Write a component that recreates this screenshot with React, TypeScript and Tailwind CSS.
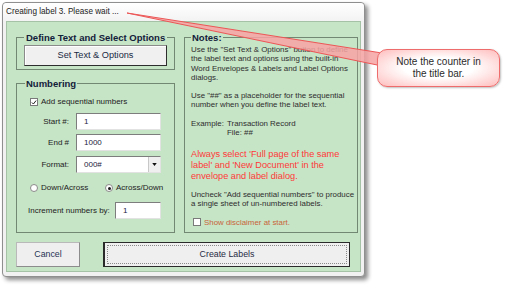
import React from "react";

const Check = ({ checked }: { checked?: boolean }) => (
  <span className="w-[8px] h-[8px] shrink-0 bg-white border border-[#7a7a7a] flex items-center justify-center">
    {checked && (
      <svg viewBox="0 0 8 8" className="w-[7px] h-[7px]">
        <path d="M1.2 4 L3.2 6 L6.8 1.4" stroke="#1b1b1b" strokeWidth="1.3" fill="none" />
      </svg>
    )}
  </span>
);

const Radio = ({ on }: { on?: boolean }) => (
  <span className="w-[8px] h-[8px] shrink-0 rounded-full bg-white border border-[#8a8a8a] flex items-center justify-center">
    {on && <span className="w-[3px] h-[3px] rounded-full bg-[#1b1b1b]" />}
  </span>
);

const TextBox = ({ value, className = "" }: { value: string; className?: string }) => (
  <div
    className={`h-[17px] bg-white border border-t-[#7d7d7d] border-l-[#7d7d7d] border-b-[#e2e2e2] border-r-[#e2e2e2] pl-[7px] flex items-center text-[8px] text-[#1c2340] ${className}`}
  >
    {value}
  </div>
);

const Row = ({ label, children, className = "" }: { label: string; children: React.ReactNode; className?: string }) => (
  <div className={`flex items-center ${className}`}>
    <span className="w-[44px] text-right text-[8px] text-[#222]">{label}</span>
    <div className="ml-[7px] w-[85px]">{children}</div>
  </div>
);

export default function App() {
  return (
    <div className="relative w-[512px] h-[292px] bg-white overflow-hidden font-['Liberation_Sans',Arial,sans-serif]">
      {/* dialog window */}
      <div className="ml-[2px] mt-[2px] w-[363px] h-[275px] flex flex-col bg-[#f1f1f1] border border-[#8f8f8f] rounded-[4px] shadow-[3px_3px_4px_rgba(0,0,0,0.45)]">
        <div className="h-[18px] pl-[3px] flex items-center text-[8.2px] text-[#222] bg-[linear-gradient(#ffffff,#f3f3f3)] rounded-t-[4px]">
          Creating label 3. Please wait ...
        </div>

        <div className="mx-[3px] mb-[4px] flex-1 bg-[#c6e4c6] border border-[#a6c2a6] pt-[9px] pl-[9px] pr-[10px] pb-[4px] flex flex-col">
          <div className="flex gap-[9px] h-[202px]">
            {/* left column */}
            <div className="w-[159px] flex flex-col gap-[7px]">
              <fieldset className="h-[39px] min-w-0 border border-[#728872] px-[7px] pb-[3px]">
                <legend className="px-[2px] text-[9.5px] font-bold leading-[13px] text-[#13203a] whitespace-nowrap">
                  Define Text and Select Options
                </legend>
                <div className="mt-[1px] h-[21px] bg-[#f0f0f0] border border-[#8a8a8a] border-r-[#2e2e2e] border-b-[#2e2e2e] shadow-[inset_1px_1px_0_#ffffff] flex items-center justify-center text-[9.2px] text-[#1a2a44]">
                  Set Text &amp; Options
                </div>
              </fieldset>

              <fieldset className="flex-1 min-h-0 border border-[#728872] pl-[8px] pr-[4px]">
                <legend className="px-[1px] text-[9.5px] font-bold leading-[13px] text-[#13203a]">Numbering</legend>
                <div className="mt-[6px] h-[12px] pl-[5px] flex items-center gap-[3px] text-[8px] text-[#222]">
                  <Check checked />
                  <span>Add sequential numbers</span>
                </div>
                <Row label="Start #:" className="mt-[5px]">
                  <TextBox value="1" />
                </Row>
                <Row label="End #" className="mt-[4px]">
                  <TextBox value="1000" />
                </Row>
                <Row label="Format:" className="mt-[5px]">
                  <div className="h-[17px] bg-white border border-t-[#7d7d7d] border-l-[#7d7d7d] border-b-[#e2e2e2] border-r-[#e2e2e2] pl-[7px] flex items-center text-[8px] text-[#1c2340]">
                    <span className="flex-1">000#</span>
                    <span className="w-[12px] h-[15px] bg-[#efefef] border-l border-[#c8c8c8] flex items-center justify-center">
                      <svg viewBox="0 0 6 4" className="w-[5px] h-[3px]">
                        <path d="M0 0 H6 L3 4 Z" fill="#111" />
                      </svg>
                    </span>
                  </div>
                </Row>
                <div className="mt-[9px] h-[12px] pl-[5px] flex items-center text-[8px] text-[#222]">
                  <div className="w-[75px] flex items-center gap-[3px]">
                    <Radio />
                    <span>Down/Across</span>
                  </div>
                  <div className="flex items-center gap-[3px]">
                    <Radio on />
                    <span>Across/Down</span>
                  </div>
                </div>
                <div className="mt-[8px] pl-[3px] flex items-center">
                  <span className="w-[87px] text-[8px] text-[#222]">Increment numbers by:</span>
                  <TextBox value="1" className="w-[46px]" />
                </div>
              </fieldset>
            </div>

            {/* notes */}
            <fieldset className="flex-1 border border-[#728872] pl-[6px] pr-[3px] text-[7.9px] leading-[9.3px] text-[#2e2e2e] whitespace-nowrap">
              <legend className="px-[1px] text-[9.5px] font-bold leading-[13px] text-[#13203a]">Notes:</legend>
              <p className="mt-[1px]">
                Use the &quot;Set Text &amp; Options&quot; button to define
                <br />
                the label text and options using the built-in
                <br />
                Word Envelopes &amp; Labels and Label Options
                <br />
                dialogs.
              </p>
              <p className="mt-[9px]">
                Use &quot;##&quot; as a placeholder for the sequential
                <br />
                number when you define the label text.
              </p>
              <div className="mt-[9px] flex">
                <span className="w-[36px]">Example:</span>
                <span>
                  Transaction Record
                  <br />
                  File: ##
                </span>
              </div>
              <p className="mt-[12px] text-[9.2px] leading-[10.8px] text-[#ff3838]">
                Always select &apos;Full page of the same
                <br />
                label&apos; and &apos;New Document&apos; in the
                <br />
                envelope and label dialog.
              </p>
              <p className="mt-[8px]">
                Uncheck &quot;Add sequential numbers&quot; to produce
                <br />
                a single sheet of un-numbered labels.
              </p>
              <div className="mt-[9px] h-[10px] pl-[2px] flex items-center gap-[3px] text-[#c8643a]">
                <Check />
                <span>Show disclaimer at start.</span>
              </div>
            </fieldset>
          </div>

          {/* buttons */}
          <div className="mt-[9px] h-[25px] flex gap-[23px]">
            <div className="w-[64px] bg-[#efefef] border border-[#b9b9b9] border-b-[#8c8c8c] border-r-[#8c8c8c] flex items-center justify-center text-[8.8px] text-[#1f3355]">
              Cancel
            </div>
            <div className="flex-1 bg-[#efefef] border border-[#2a2a2a] border-l-2 p-[2px]">
              <div className="h-full border border-dotted border-[#8a8a8a] flex items-center justify-center text-[8.8px] text-[#1f2a44]">
                Create Labels
              </div>
            </div>
          </div>
        </div>
      </div>

      {/* callout pointer */}
      <svg className="absolute inset-0 pointer-events-none" width="512" height="292" viewBox="0 0 512 292">
        <polygon points="127,13 382,53 382,66" fill="#f7a3a3" fillOpacity="0.85" stroke="#ec5656" strokeWidth="1" strokeLinejoin="round" />
      </svg>

      {/* callout */}
      <div className="absolute left-[377px] top-[49px] w-[123px] h-[38px] rounded-[10px] border-[1.5px] border-[#ee6c6c] bg-[radial-gradient(ellipse_at_center,#ffffff_40%,#ffbcbc_100%)] shadow-[1px_1px_2px_rgba(0,0,0,0.25)] flex items-center justify-center text-center text-[10px] leading-[12px] text-[#2b2b2b]">
        Note the counter in
        <br />
        the title bar.
      </div>
    </div>
  );
}
